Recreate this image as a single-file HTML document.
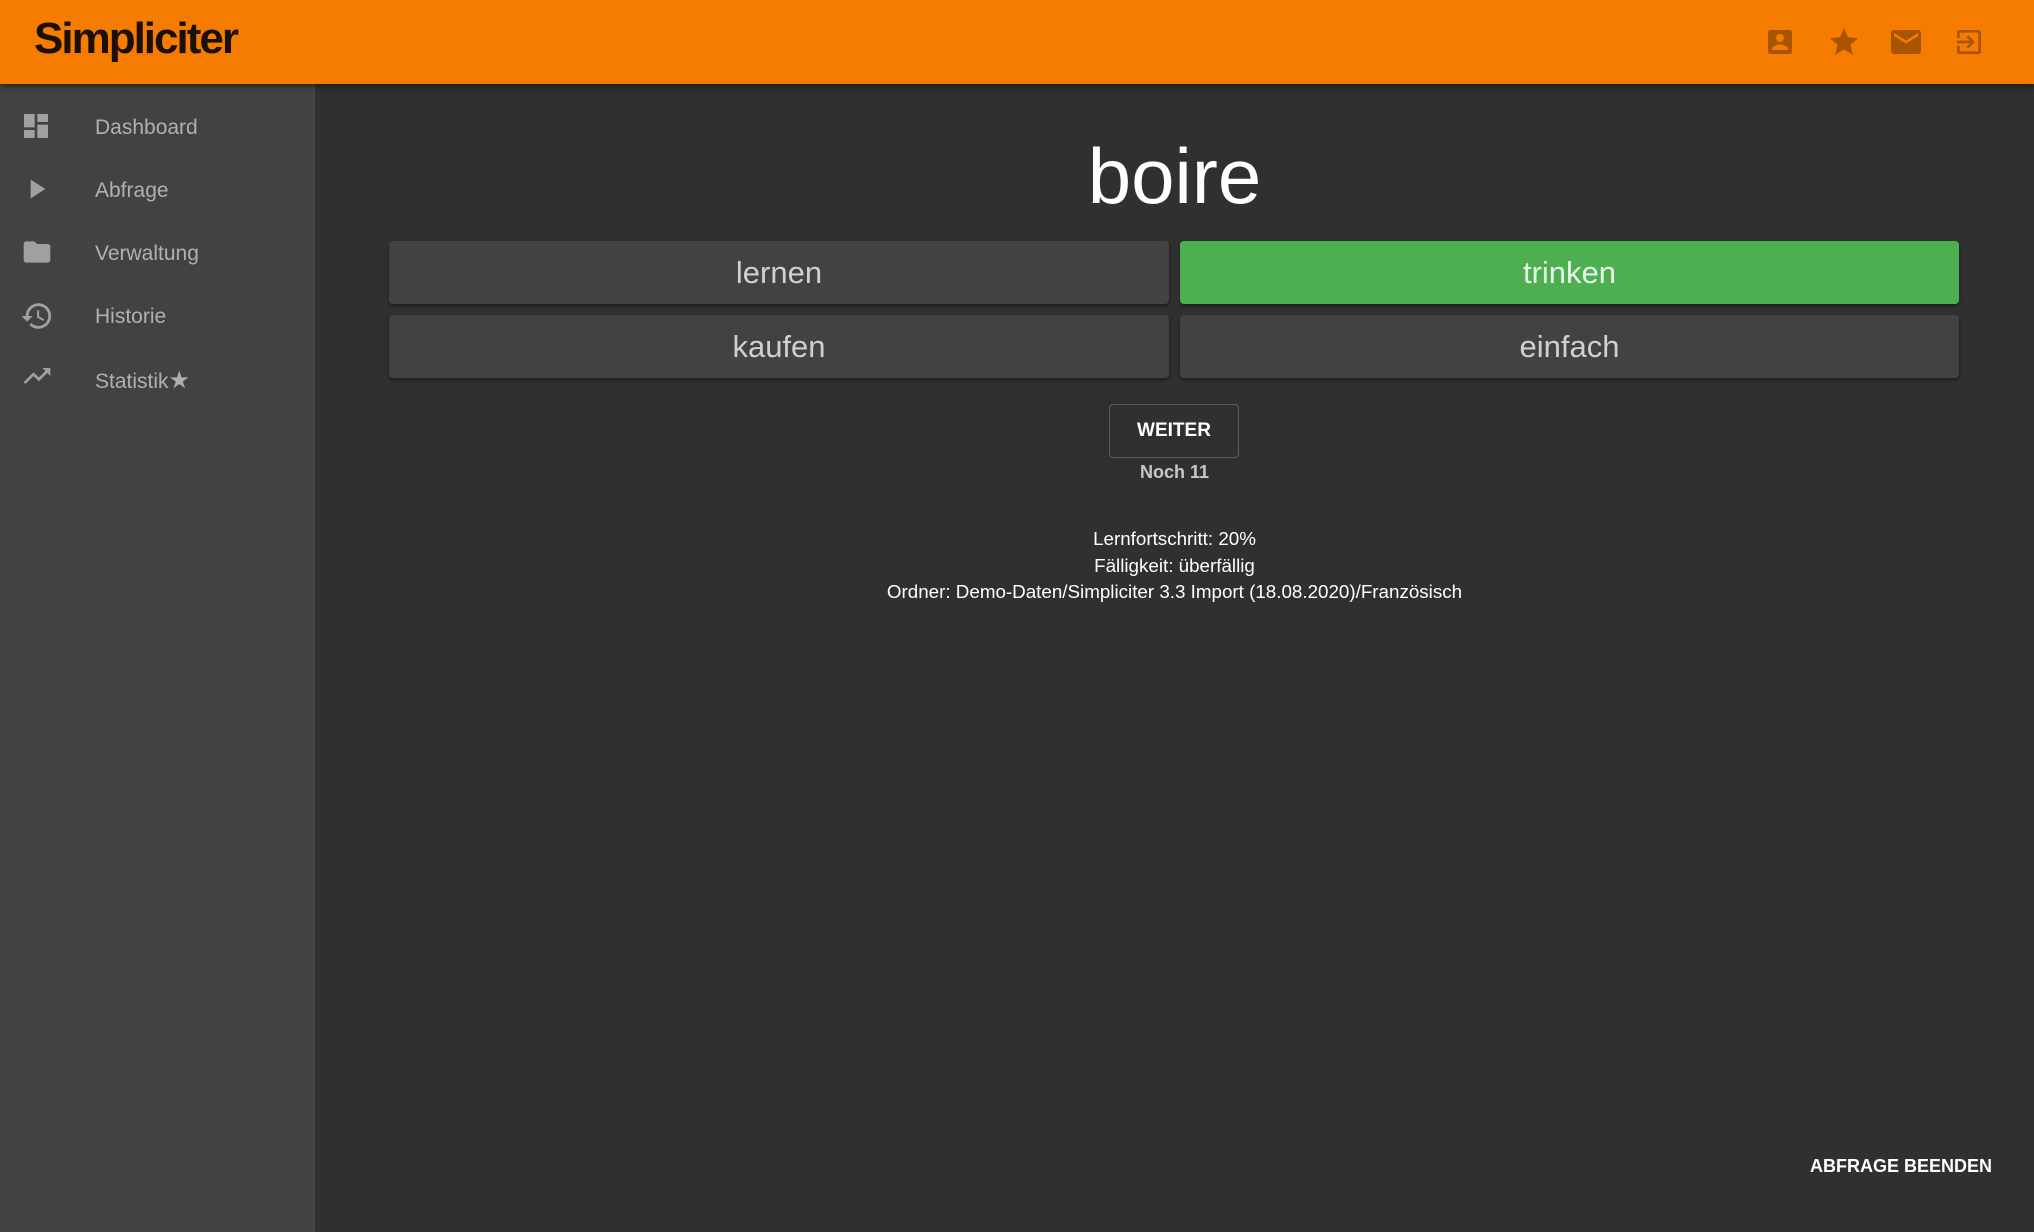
<!DOCTYPE html>
<html><head><meta charset="utf-8"><style>
*{margin:0;padding:0;box-sizing:border-box}
body{width:2034px;height:1232px;background:#303030;font-family:"Liberation Sans",sans-serif;position:relative;overflow:hidden}
.hdr{position:absolute;left:0;top:0;width:2034px;height:84px;background:#f57c00;box-shadow:0 2px 6px rgba(0,0,0,.5);z-index:2}
.logo{position:absolute;left:34px;top:14px;font-size:44px;color:#1a1008;font-weight:bold;letter-spacing:-2px}
.side{position:absolute;left:0;top:84px;width:315px;height:1148px;background:#424242;border-right:1px solid #4a4a4a}
.item{position:absolute;left:0;width:315px;height:40px}
.item span{position:absolute;left:95px;top:10px;font-size:21px;color:#b0b0b0}
.item svg{position:absolute;left:20px;top:4px}
.btn{position:absolute;height:63px;background:#424242;border-radius:4px;box-shadow:0 2px 3px rgba(0,0,0,.4);color:#d0d0d0;font-size:31px;text-align:center;line-height:63px}
.c{position:absolute;left:315px;width:1719px;text-align:center;color:#fff}
</style></head><body>
<div class="hdr"><div class="logo">Simpliciter</div>
<svg style="position:absolute;left:1764px;top:26px" width="32" height="32" viewBox="0 0 24 24" fill="#a85400"><path d="M3 5v14a2 2 0 002 2h14a2 2 0 002-2V5a2 2 0 00-2-2H5a2 2 0 00-2 2zm12 4a3 3 0 11-6 0 3 3 0 016 0zm-9 8c0-2 4-3.1 6-3.1s6 1.1 6 3.1v1H6z"/></svg>
<svg style="position:absolute;left:1827px;top:25px" width="34" height="34" viewBox="0 0 24 24" fill="#a85400"><path d="M12 17.27L18.18 21l-1.64-7.03L22 9.24l-7.19-.61L12 2 9.19 8.63 2 9.24l5.46 4.73L5.82 21z"/></svg>
<svg style="position:absolute;left:1888px;top:24px" width="36" height="36" viewBox="0 0 24 24" fill="#a85400"><path d="M20 4H4a2 2 0 00-2 2v12a2 2 0 002 2h16a2 2 0 002-2V6a2 2 0 00-2-2zm0 4l-8 5-8-5V6l8 5 8-5z"/></svg>
<svg style="position:absolute;left:1953px;top:26px" width="32" height="32" viewBox="0 0 24 24" fill="#a85400"><path d="M10.09 15.59L11.5 17l5-5-5-5-1.41 1.41L12.67 11H3v2h9.67zM19 3H5a2 2 0 00-2 2v4h2V5h14v14H5v-4H3v4a2 2 0 002 2h14a2 2 0 002-2V5a2 2 0 00-2-2z"/></svg>
</div>
<div class="side">
<div class="item" style="top:22px"><svg width="32" height="32" viewBox="0 0 24 24" fill="#a0a0a0"><path d="M3 13h8V3H3zm0 8h8v-6H3zm10 0h8V11h-8zm0-18v6h8V3z"/></svg><span>Dashboard</span></div>
<div class="item" style="top:85px"><svg width="32" height="32" viewBox="0 0 24 24" fill="#a0a0a0"><path d="M8 5v14l11-7z"/></svg><span>Abfrage</span></div>
<div class="item" style="top:148px"><svg width="34" height="32" viewBox="0 0 24 24" fill="#a0a0a0"><path d="M10 4H4a2 2 0 00-2 2v12a2 2 0 002 2h16a2 2 0 002-2V8a2 2 0 00-2-2h-8z"/></svg><span>Verwaltung</span></div>
<div class="item" style="top:211px"><svg width="34" height="34" viewBox="0 0 24 24" fill="#a0a0a0"><path d="M13 3a9 9 0 00-9 9H1l3.89 3.89.07.14L9 12H6a7 7 0 112.05 4.95l-1.42 1.42A9 9 0 1013 3zm-1 5v5l4.28 2.54.72-1.21-3.5-2.08V8z"/></svg><span>Historie</span></div>
<div class="item" style="top:272px"><svg width="34" height="32" viewBox="0 0 24 24" fill="#a0a0a0"><path d="M16 6l2.29 2.29-4.88 4.88-4-4L2 16.59 3.41 18l6-6 4 4 6.3-6.29L22 12V6z"/></svg><span>Statistik<span style="position:static;color:#b0b0b0;font-size:24px">★</span></span></div>
</div>
<div class="c" style="top:128px;font-size:78px;line-height:96px">boire</div>
<div class="btn" style="left:389px;top:241px;width:780px">lernen</div>
<div class="btn" style="left:1180px;top:241px;width:779px;background:#4caf50;color:#e8f5e9">trinken</div>
<div class="btn" style="left:389px;top:315px;width:780px">kaufen</div>
<div class="btn" style="left:1180px;top:315px;width:779px">einfach</div>
<div style="position:absolute;left:1109px;top:404px;width:130px;height:54px;border:1px solid #5a5a5a;border-radius:4px;color:#fff;font-weight:bold;font-size:19px;text-align:center;line-height:52px">WEITER</div>
<div class="c" style="top:462px;font-size:18px;color:#c8c8c8;font-weight:bold">Noch 11</div>
<div class="c" style="top:526px;font-size:18.8px;line-height:26.5px">Lernfortschritt: 20%<br>Fälligkeit: überfällig<br>Ordner: Demo-Daten/Simpliciter 3.3 Import (18.08.2020)/Französisch</div>
<div style="position:absolute;right:42px;top:1156px;color:#fff;font-weight:bold;font-size:18px">ABFRAGE BEENDEN</div>
</body></html>
